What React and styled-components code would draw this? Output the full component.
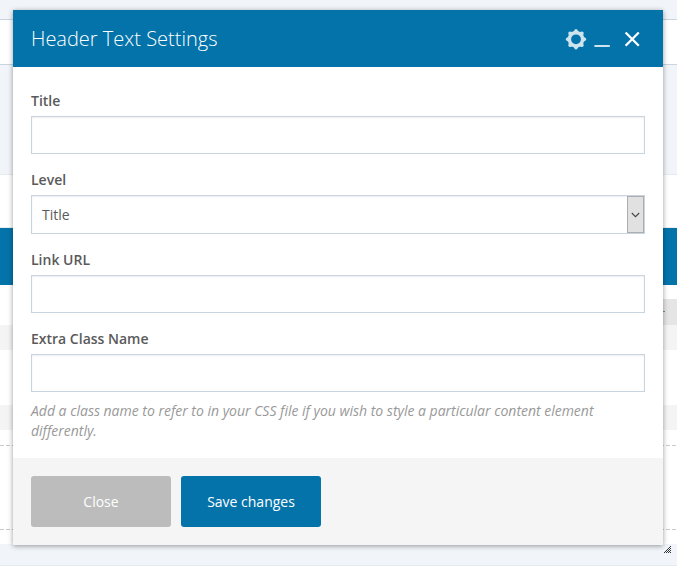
import React from 'react';
import styled, { createGlobalStyle } from 'styled-components';

const GlobalStyle = createGlobalStyle`
  * {
    box-sizing: border-box;
  }
  body {
    margin: 0;
    overflow: hidden;
    background: #fff;
    font-family: "Open Sans", "Noto Sans", sans-serif;
    font-size: 14px;
    color: #5a5a5a;
  }
`;

const Page = styled.div`
  position: relative;
  height: 571px;
  overflow: hidden;
`;

const Backdrop = styled.div`
  display: flex;
  flex-direction: column;
`;

const Band = styled.div`
  display: flex;
  justify-content: flex-end;
  flex: none;
  height: ${(p) => p.height}px;
  background: ${(p) => p.color || '#fff'};
  border-bottom: ${(p) => (p.line ? `1px solid ${p.line}` : 'none')};
`;

const DashedLine = styled.div`
  height: 1px;
  background: repeating-linear-gradient(90deg, #c9c9c9 0 4px, #fff 4px 6px);
`;

const Tab = styled.div`
  width: 60px;
  height: 26px;
  padding: 12px 0 0 44px;
  background: #e5e5e5;
`;

const TabMark = styled.div`
  width: 4px;
  height: 1px;
  background: #6d8ea5;
`;

const Dialog = styled.div`
  position: absolute;
  top: 10px;
  left: 13px;
  width: 650px;
  background: #fff;
  box-shadow: 0 1px 5px rgba(0, 0, 0, 0.4);
`;

const Header = styled.div`
  display: flex;
  align-items: center;
  justify-content: space-between;
  height: 57px;
  padding: 0 23px 0 18px;
  background: #0473aa;
`;

const Heading = styled.h3`
  margin: 0;
  color: #fff;
  font-size: 20px;
  font-weight: 300;
  line-height: 56px;
`;

const Controls = styled.div`
  display: flex;
  align-items: center;
  padding-top: 1px;

  svg {
    display: block;
  }
`;

const Control = styled.span`
  margin-left: ${(p) => p.$gap || 0}px;
`;

const Body = styled.div`
  height: 391px;
  padding: 24px 18px 0;
`;

const Field = styled.div`
  margin-bottom: 16px;
`;

const Label = styled.label`
  display: block;
  margin-bottom: 5px;
  font-weight: 600;
  line-height: 20px;
`;

const Input = styled.input`
  display: block;
  width: 100%;
  height: 38px;
  padding: 0 10px;
  border: 1px solid #c8d5e0;
  border-radius: 0;
  background: #fff;
  box-shadow: inset 0 1px 2px rgba(0, 0, 0, 0.07);
  color: #555;
  font: inherit;
  outline: none;
`;

const Select = styled.div`
  display: flex;
  justify-content: space-between;
  height: 39px;
  padding-left: 10px;
  border: 1px solid #c8d5e0;
  box-shadow: inset 0 1px 2px rgba(0, 0, 0, 0.07);
  line-height: 37px;
`;

const SelectArrow = styled.span`
  display: flex;
  align-items: center;
  justify-content: center;
  width: 17px;
  border: 1px solid #adadad;
  background: #e1e1e1;
`;

const Help = styled.p`
  margin: 9px 0 0;
  color: #999;
  font-style: italic;
  letter-spacing: -0.012px;
  line-height: 20px;
`;

const Footer = styled.div`
  display: flex;
  gap: 10px;
  height: 87px;
  padding: 18px;
  background: #f5f5f5;
`;

const Button = styled.button`
  width: 140px;
  height: 51px;
  padding: 0;
  border: none;
  border-radius: 3px;
  background: ${(p) => (p.$primary ? '#0473aa' : '#bcbcbc')};
  color: #fff;
  font: inherit;
  cursor: pointer;
`;

const Grip = styled.svg`
  position: absolute;
  top: 546px;
  left: 664px;
`;

// teeth of the gear, one every 45 degrees
const teeth = [0, 45, 90, 135, 180, 225, 270, 315];

function GearIcon() {
  return (
    <svg width="22" height="22" viewBox="0 0 22 22">
      <circle cx="11" cy="11.3" r="6.6" fill="none" stroke="#cde3ee" strokeWidth="3.4" />
      <g fill="#cde3ee">
        {teeth.map((a) => (
          <path key={a} d="M7.8 4.6 L9.2 2.5 Q9.9 1 11 1 Q12.1 1 12.8 2.5 L14.2 4.6 Z" transform={`rotate(${a} 11 11.3)`} />
        ))}
      </g>
    </svg>
  );
}

function MinimizeIcon() {
  return (
    <svg width="16" height="22" viewBox="0 0 16 22">
      <rect x="0.4" y="17" width="15.4" height="2" fill="#cde3ee" />
    </svg>
  );
}

function CloseIcon() {
  return (
    <svg width="16" height="22" viewBox="0 0 16 22">
      <path d="M1.6 4.5 L14.8 17.7 M14.8 4.5 L1.6 17.7" stroke="#fff" strokeWidth="2.3" />
    </svg>
  );
}

const gripDots = [
  [6, 0], [5, 1], [4, 2], [6, 2], [3, 3], [5, 3], [2, 4], [4, 4], [6, 4], [1, 5], [3, 5], [5, 5], [0, 6], [2, 6], [4, 6], [6, 6],
];

function App() {
  return (
    <Page>
      <GlobalStyle />
      <Backdrop>
        <Band height={20} color="#f1f5f9" line="#c8d5e0" />
        <Band height={45} line="#c8d5e0" />
        <Band height={110} color="#f1f5f9" line="#e5eaef" />
        <Band height={53} line="#e8eef2" />
        <Band height={57} color="#0473aa" />
        <Band height={14} />
        <Band height={26}>
          <Tab>
            <TabMark />
          </Tab>
        </Band>
        <Band height={25} color="#f4f4f4" />
        <Band height={55} />
        <Band height={25} color="#f4f4f4" />
        <Band height={15} />
        <DashedLine />
        <Band height={83} />
        <DashedLine />
        <Band height={14} />
        <Band height={22} color="#f1f5f9" line="#e5eaef" />
      </Backdrop>

      <Dialog>
        <Header>
          <Heading>Header Text Settings</Heading>
          <Controls>
            <Control>
              <GearIcon />
            </Control>
            <Control $gap={7}>
              <MinimizeIcon />
            </Control>
            <Control $gap={14}>
              <CloseIcon />
            </Control>
          </Controls>
        </Header>
        <Body>
          <Field>
            <Label>Title</Label>
            <Input type="text" />
          </Field>
          <Field>
            <Label>Level</Label>
            <Select>
              Title
              <SelectArrow>
                <svg width="9" height="6" viewBox="0 0 9 6">
                  <path d="M0.8 1 L4.5 4.7 L8.2 1" fill="none" stroke="#444" strokeWidth="1.1" />
                </svg>
              </SelectArrow>
            </Select>
          </Field>
          <Field>
            <Label>Link URL</Label>
            <Input type="text" />
          </Field>
          <Field>
            <Label>Extra Class Name</Label>
            <Input type="text" />
            <Help>
              Add a class name to refer to in your CSS file if you wish to style a particular content element differently.
            </Help>
          </Field>
        </Body>
        <Footer>
          <Button>Close</Button>
          <Button $primary>Save changes</Button>
        </Footer>
      </Dialog>

      <Grip width="7" height="7" viewBox="0 0 7 7" shapeRendering="crispEdges">
        {gripDots.map(([x, y]) => (
          <rect key={`${x}-${y}`} x={x} y={y} width="1" height="1" fill="#333" />
        ))}
      </Grip>
    </Page>
  );
}

export default App;
